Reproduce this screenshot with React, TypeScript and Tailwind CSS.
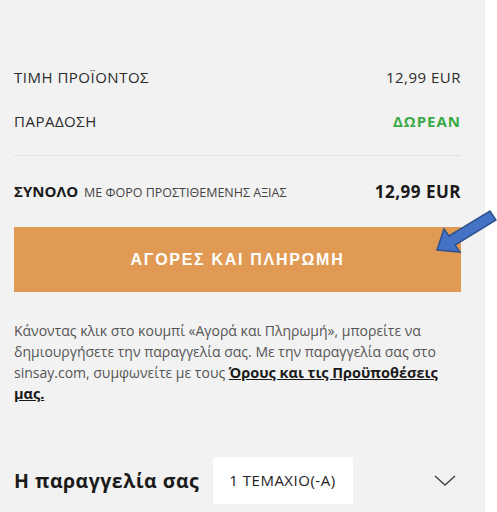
import React from 'react';

const font = { fontFamily: '"Open Sans", "Noto Sans", sans-serif' };

function Row({ label, value, valueClass }: { label: string; value: string; valueClass: string }) {
  return (
    <div className="flex items-center justify-between h-[44px]">
      <span className="text-[15px] tracking-[0.5px] text-[#2b2b2b]">{label}</span>
      <span className={valueClass}>{value}</span>
    </div>
  );
}

export default function App() {
  return (
    <div className="relative w-[497px] h-[512px] bg-white overflow-hidden" style={font}>
      <div className="w-[485px] h-full bg-[#f2f2f2] pl-[14px] pr-[24px] pt-[55px]">
        <Row label="ΤΙΜΗ ΠΡΟΪΟΝΤΟΣ" value="12,99 EUR" valueClass="text-[15px] tracking-[0.5px] text-[#2b2b2b]" />
        <Row label="ΠΑΡΑΔΟΣΗ" value="ΔΩΡΕΑΝ" valueClass="text-[15px] tracking-[1px] font-bold text-[#3aaa46]" />
        <div className="mt-[12px] border-t border-[#e2e2e2]" />
        <div className="flex items-center justify-between h-[71px]">
          <div className="flex items-baseline gap-[6px]">
            <span className="text-[15px] font-bold text-[#1a1a1a]">ΣΥΝΟΛΟ</span>
            <span className="text-[12.5px] text-[#444]">ΜΕ ΦΟΡΟ ΠΡΟΣΤΙΘΕΜΕΝΗΣ ΑΞΙΑΣ</span>
          </div>
          <span className="text-[17px] font-bold tracking-[0.5px] text-[#1a1a1a]">12,99 EUR</span>
        </div>
        <button className="w-full h-[65px] bg-[#e09a54] text-white text-[16px] font-bold tracking-[1.7px]" style={{ fontFamily: '"Liberation Sans", Arial, sans-serif' }}>
          ΑΓΟΡΕΣ ΚΑΙ ΠΛΗΡΩΜΗ
        </button>
        <p className="mt-[28px] text-[14px] leading-[21px] text-[#555]">
          Κάνοντας κλικ στο κουμπί «Αγορά και Πληρωμή», μπορείτε να δημιουργήσετε την παραγγελία σας. Με την παραγγελία σας στο sinsay.com, συμφωνείτε με τους{' '}
          <a className="font-bold underline text-[14.5px] text-[#1a1a1a]">Όρους και τις Προϋποθέσεις μας.</a>
        </p>
        <div className="mt-[53px] flex items-center">
          <span className="text-[19.5px] font-bold tracking-[0.5px] text-[#1a1a1a]">Η παραγγελία σας</span>
          <div className="ml-[14px] w-[140px] h-[47px] bg-white flex items-center pl-[16px] text-[15px] tracking-[0.5px] text-[#222]">
            1 ΤΕΜΑΧΙΟ(-Α)
          </div>
          <svg className="ml-auto mr-[5px]" width="22" height="12" viewBox="0 0 22 12" fill="none">
            <path d="M1 1l10 9 10-9" stroke="#444" strokeWidth="1.5" />
          </svg>
        </div>
      </div>
      <svg className="absolute left-[432px] top-[208px]" width="66" height="50" viewBox="0 0 66 50">
        <path
          d="M5 42 L12 21 L17 28 L58 3 L64 12 L23 37 L28 44 Z"
          fill="#4472c4"
          stroke="#2f528f"
          strokeWidth="1.5"
          strokeLinejoin="miter"
        />
      </svg>
    </div>
  );
}
